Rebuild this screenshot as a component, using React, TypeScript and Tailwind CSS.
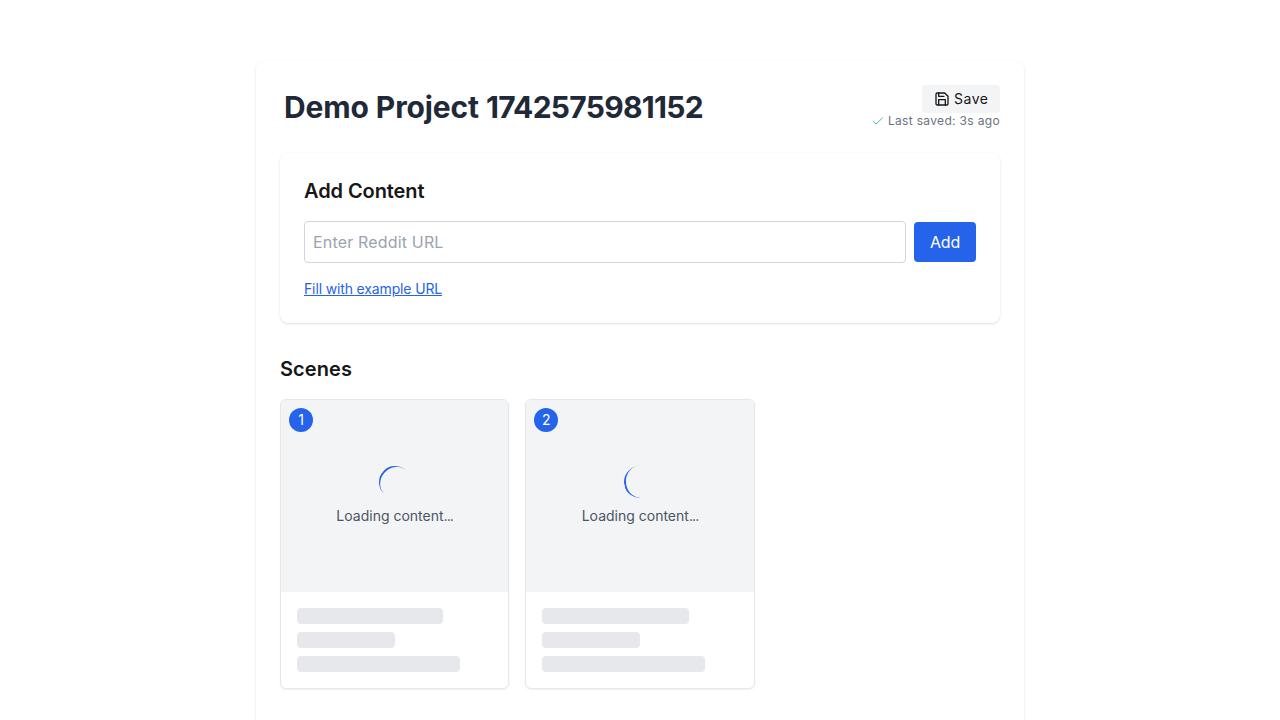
import React from 'react';

function SaveIcon() {
  return (
    <svg className="h-4 w-4" viewBox="0 0 24 24" fill="none" stroke="currentColor" strokeWidth="2" strokeLinecap="round" strokeLinejoin="round">
      <path d="M19 21H5a2 2 0 0 1-2-2V5a2 2 0 0 1 2-2h11l5 5v11a2 2 0 0 1-2 2z" />
      <path d="M17 21v-8H7v8" />
      <path d="M7 3v5h8" />
    </svg>
  );
}

function SceneCard({ index, turn }: { index: number; turn: string }) {
  return (
    <div className="overflow-hidden rounded-md border border-[#e5e7eb] bg-white shadow-[0_1px_2px_rgba(0,0,0,0.06)]">
      <div className="relative flex h-48 flex-col items-center justify-center bg-[#f3f4f6]">
        <div className="absolute left-2 top-2 flex h-6 w-6 items-center justify-center rounded-full bg-[#2563eb] text-sm text-white">{index}</div>
        <div className={`mb-2 h-8 w-8 rounded-full border-t-[2.5px] border-[#2563eb] ${turn}`} />
        <p className="text-sm text-[#4b5563]">Loading content<span className="tracking-[-0.9px]">...</span></p>
      </div>
      <div className="flex flex-col gap-2 p-4">
        <div className="h-4 w-3/4 rounded bg-[#e7e8ec]" />
        <div className="h-4 w-1/2 rounded bg-[#e7e8ec]" />
        <div className="h-4 w-5/6 rounded bg-[#e7e8ec]" />
      </div>
    </div>
  );
}

export default function App() {
  return (
    <main className="h-screen overflow-hidden bg-white pt-[61px] font-['Inter',sans-serif] text-[#171717]">
      <div className="mx-auto h-[900px] w-3xl rounded-lg bg-white p-6 shadow-sm">
        <header className="flex h-11 items-center justify-between">
          <h1 className="pl-1 text-3xl font-bold tracking-[-0.12px] text-[#1f2937]">Demo Project <span className="tracking-[-0.72px]">1742575981152</span></h1>
          <div className="flex flex-col items-end">
            <button className="flex h-7 w-[78px] items-center gap-1 rounded-sm bg-[#f3f4f6] pl-3 text-sm tracking-[0.5px]"><SaveIcon />Save</button>
            <div className="flex items-center gap-1 text-xs tracking-[0.33px] text-[#6b7280]">
              <svg className="h-3 w-3 text-[#22b866]" viewBox="0 0 24 24" fill="none" stroke="currentColor" strokeWidth="1.7" strokeLinecap="round" strokeLinejoin="round"><path d="m3 13 5 5L21 6" /></svg>
              Last saved: 3s ago
            </div>
          </div>
        </header>
        <section className="mt-6 h-[170px] rounded-lg bg-white p-6 shadow-sm">
          <h2 className="mb-4 text-xl font-semibold tracking-[-0.08px]">Add Content</h2>
          <div className="flex items-center gap-2">
            <input className="h-[42px] min-w-0 flex-1 rounded border border-[#d1d5db] px-2 tracking-[0.17px] placeholder:text-[#9ca3af]" placeholder="Enter Reddit URL" />
            <button className="h-10 w-[62px] rounded bg-[#2563eb] text-white tracking-[-0.2px]">Add</button>
          </div>
          <button className="mt-4 block text-sm tracking-[-0.14px] text-[#2563eb] underline">Fill with example URL</button>
        </section>
        <section className="mt-8">
          <h2 className="mb-4 text-xl font-semibold tracking-[0.1px]">Scenes</h2>
          <div className="grid grid-cols-3 gap-4">
            <SceneCard index={1} turn="-rotate-50" />
            <SceneCard index={2} turn="-rotate-100" />
          </div>
        </section>
      </div>
    </main>
  );
}
